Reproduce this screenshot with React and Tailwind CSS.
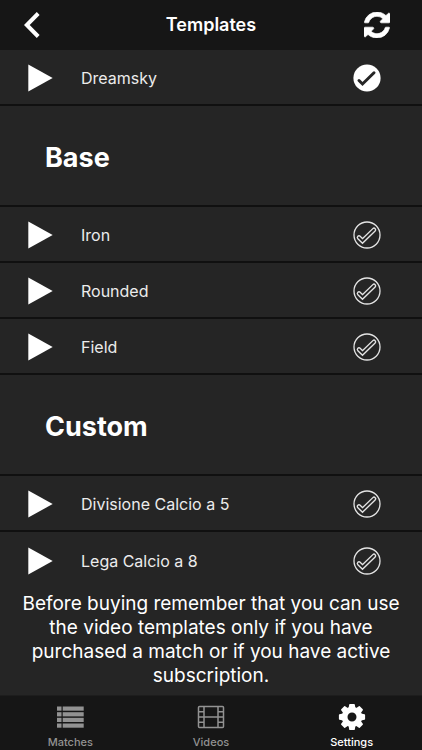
import React from 'react';

const baseTemplates = ['Iron', 'Rounded', 'Field'];
const customTemplates = ['Divisione Calcio a 5', 'Lega Calcio a 8'];

function PlayIcon() {
  return (
    <svg viewBox="0 0 25 28" className="w-[25px] h-7" fill="currentColor" aria-hidden="true">
      <path d="M.3 .5 24.7 14 .3 27.5Z" />
    </svg>
  );
}

function RefreshIcon() {
  return (
    <svg viewBox="0 0 1536 1536" className="w-[26px] h-[26px]" fill="currentColor" stroke="currentColor" strokeWidth="40" aria-hidden="true">
      <path d="M1511 928q0 5-1 7-64 268-268 434.5t-478 166.5q-146 0-282.5-55t-243.5-157l-129 129q-19 19-45 19t-45-19-19-45v-448q0-26 19-45t45-19h448q26 0 45 19t19 45-19 45l-137 137q71 66 161 102t187 36q134 0 250-65t186-179q11-17 53-117 8-23 30-23h192q13 0 22.5 9.5t9.5 22.5zm25-800v448q0 26-19 45t-45 19h-448q-26 0-45-19t-19-45 19-45l138-138q-148-137-349-137-134 0-250 65t-186 179q-11 17-53 117-8 23-30 23h-199q-13 0-22.5-9.5t-9.5-22.5v-7q65-268 270-434.5t480-166.5q146 0 284 55.5t245 156.5l130-129q19-19 45-19t45 19 19 45z" />
    </svg>
  );
}

function CheckIcon({ selected }) {
  if (selected) {
    return (
      <svg viewBox="0 0 28 28" className="w-7 h-7" fill="none" aria-hidden="true">
        <circle cx="14" cy="14" r="13.6" fill="#fff" />
        <path d="M6 16.5 9.5 20 21 8.8" stroke="#252525" strokeWidth="3" strokeLinecap="round" />
      </svg>
    );
  }
  return (
    <svg viewBox="0 0 28 28" className="w-7 h-7" fill="none" strokeLinecap="round" aria-hidden="true">
      <circle cx="14" cy="14" r="13" stroke="#e4e4e4" strokeWidth="1.3" />
      <path d="M6 16.5 9.5 20 21 8.8" stroke="#e4e4e4" strokeWidth="4.6" />
      <path d="M6 16.5 9.5 20 21 8.8" stroke="#252525" strokeWidth="1.9" />
    </svg>
  );
}

function ListIcon() {
  return (
    <svg viewBox="0 0 27 22" className="w-[27px] h-[22px]" fill="currentColor" aria-hidden="true">
      {[0.5, 6.2, 11.8, 17.5].map((y) => (
        <g key={y}>
          <rect x="0" y={y} width="4.5" height="4.2" />
          <rect x="5.7" y={y} width="21" height="4.2" />
        </g>
      ))}
    </svg>
  );
}

function FilmIcon() {
  return (
    <svg viewBox="0 0 28 24" className="w-7 h-6" fill="none" stroke="currentColor" strokeWidth="1.5" aria-hidden="true">
      <rect x="1.5" y="1.5" width="25" height="21" rx="1" />
      <path d="M7 1.5V22.5M21 1.5V22.5M7 12H21M1.5 6.7H7M1.5 12H7M1.5 17.3H7M21 6.7H26.5M21 12H26.5M21 17.3H26.5" />
    </svg>
  );
}

function GearIcon() {
  return (
    <svg viewBox="0 0 28 28" className="w-7 h-7" fill="currentColor" aria-hidden="true">
      <path fillRule="evenodd" d="M14 3.8a10.2 10.2 0 1 0 0 20.4a10.2 10.2 0 1 0 0-20.4ZM14 9.5a4.5 4.5 0 1 1 0 9a4.5 4.5 0 1 1 0-9Z" />
      {[0, 45, 90, 135, 180, 225, 270, 315].map((angle) => (
        <path key={angle} d="M10.6 5 11.2 1.5Q11.3 .9 11.9 .9H16.1Q16.7 .9 16.8 1.5L17.4 5Z" transform={`rotate(${angle} 14 14)`} />
      ))}
    </svg>
  );
}

function TemplateRow({ name, selected = false, last = false }) {
  return (
    <li className={`flex items-center h-14 pt-0.5 pl-7 pr-[41px] ${last ? '' : 'border-b-2 border-[#101010]'}`}>
      <button type="button" aria-label={`Play ${name}`}>
        <PlayIcon />
      </button>
      <span className="flex-1 pl-7 text-base text-[#ececec]">{name}</span>
      <button type="button" aria-label={`Select ${name}`} aria-pressed={selected}>
        <CheckIcon selected={selected} />
      </button>
    </li>
  );
}

function SectionTitle({ children }) {
  return (
    <h2 className="flex items-center h-[101px] pt-1.5 pl-[45px] border-b-2 border-[#101010] text-[27px] font-bold">
      {children}
    </h2>
  );
}

function Tab({ label, icon, active = false }) {
  return (
    <a
      href={`#${label.toLowerCase()}`}
      aria-current={active ? 'page' : undefined}
      className={`flex flex-1 flex-col items-center pt-[3px] text-[11px] font-medium ${active ? 'text-white' : 'text-[#929292]'}`}
    >
      <span className="flex items-center h-9">{icon}</span>
      <span className="leading-4">{label}</span>
    </a>
  );
}

function App() {
  return (
    <div className="flex flex-col min-h-screen bg-[#252525] text-white font-[Inter,'Liberation_Sans',sans-serif]">
      {/* Header */}
      <header className="flex items-center justify-between h-[50px] pl-6 pr-8 bg-[#161616]">
        <button type="button" aria-label="Back" className="w-[26px]">
          <svg viewBox="0 0 16 26" className="w-4 h-[26px]" fill="none" stroke="currentColor" strokeWidth="4" aria-hidden="true">
            <path d="M14.2 1.5 2.8 13 14.2 24.5" />
          </svg>
        </button>
        <h1 className="pl-2 text-lg font-semibold">Templates</h1>
        <button type="button" aria-label="Refresh">
          <RefreshIcon />
        </button>
      </header>

      {/* Template list */}
      <main className="flex-1">
        <ul>
          <TemplateRow name="Dreamsky" selected />
        </ul>
        <SectionTitle>Base</SectionTitle>
        <ul>
          {baseTemplates.map((name) => (
            <TemplateRow key={name} name={name} />
          ))}
        </ul>
        <SectionTitle>Custom</SectionTitle>
        <ul>
          {customTemplates.map((name, index) => (
            <TemplateRow key={name} name={name} last={index === customTemplates.length - 1} />
          ))}
        </ul>
        <p className="px-4 pt-1 text-center text-[19px] leading-6">
          Before buying remember that you can use the video templates only if you have purchased a match or if you have active subscription.
        </p>
      </main>

      {/* Tab bar */}
      <nav className="flex h-[55px] border-t border-[#1d1d1d] bg-[#161616]">
        <Tab label="Matches" icon={<ListIcon />} />
        <Tab label="Videos" icon={<FilmIcon />} />
        <Tab label="Settings" icon={<GearIcon />} active />
      </nav>
    </div>
  );
}

export default App;
